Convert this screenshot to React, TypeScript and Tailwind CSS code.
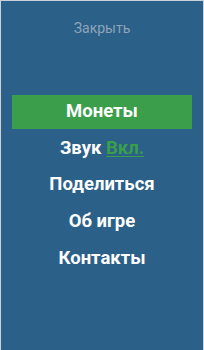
const items = ["Поделиться", "Об игре", "Контакты"];

export default function App() {
  return (
    <div
      className="h-[350px] w-[204px] overflow-hidden border-l border-t border-r border-[#c9d2da] bg-[#2b6088]"
      style={{ fontFamily: "Roboto, 'Noto Sans', sans-serif" }}
    >
      <div className="pt-[17px] text-center text-[14px] leading-[20px] text-[#8ea4b8]">Закрыть</div>
      <div className="mt-[57px] flex flex-col items-stretch px-[11px]">
        <div className="flex h-[34px] items-center justify-center bg-[#3a9e4b] text-[18.5px] font-bold text-white">
          Монеты
        </div>
        <div className="flex h-[37px] items-center justify-center pt-[3px] text-[18.5px] font-bold text-white">
          Звук&nbsp;<span className="text-[#3a9e4b] underline underline-offset-2">Вкл.</span>
        </div>
        {items.map((t) => (
          <div key={t} className="flex h-[37px] items-center justify-center text-[18.5px] font-bold text-white">
            {t}
          </div>
        ))}
      </div>
    </div>
  );
}
